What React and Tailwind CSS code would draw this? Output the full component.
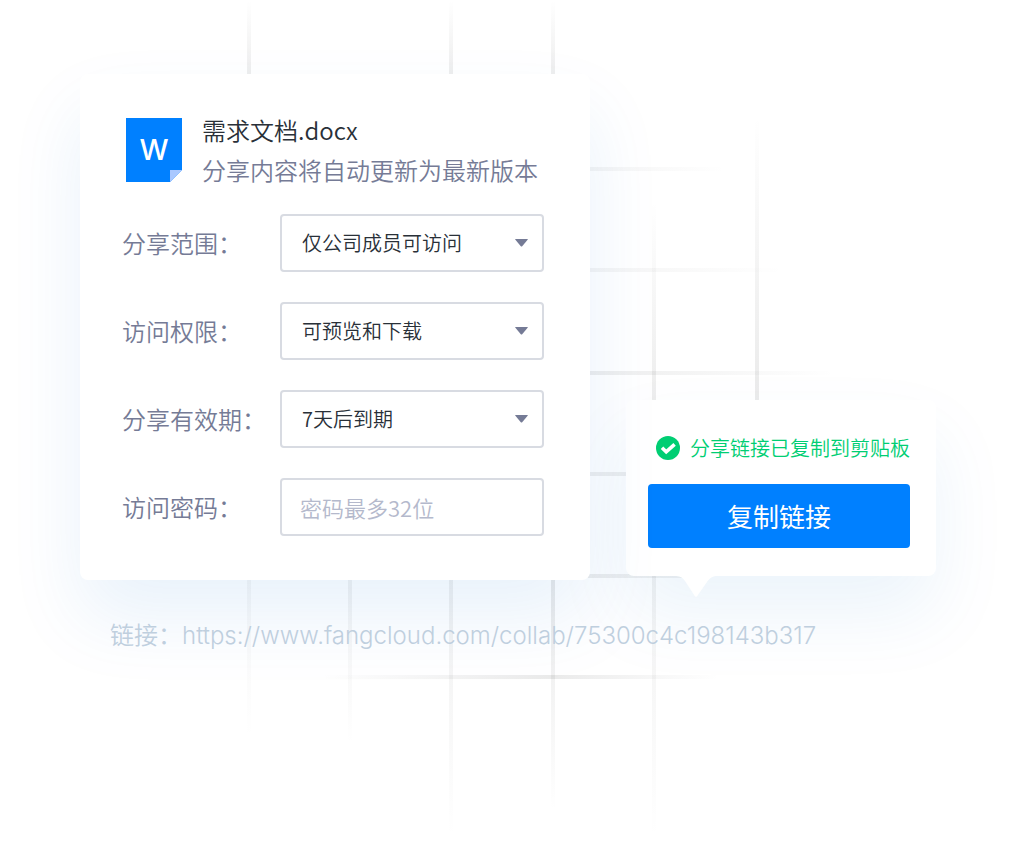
import React from "react";

const verticals = [
  { x: 247, y: 0, h: 78, from: 0, to: 0.08 },
  { x: 449, y: 0, h: 78, from: 0, to: 0.08 },
  { x: 551, y: 0, h: 78, from: 0, to: 0.08 },
  { x: 652, y: 200, h: 200, from: 0, to: 0.08 },
  { x: 755, y: 115, h: 285, from: 0, to: 0.09 },
  { x: 247, y: 576, h: 164, from: 0.04, to: 0 },
  { x: 348, y: 576, h: 170, from: 0.06, to: 0 },
  { x: 449, y: 576, h: 262, from: 0.07, to: 0 },
  { x: 551, y: 576, h: 236, from: 0.1, to: 0 },
  { x: 652, y: 576, h: 264, from: 0.06, to: 0 },
];

const horizontals = [
  { y: 167, x: 586, w: 140, from: 0.05, to: 0 },
  { y: 268, x: 586, w: 200, from: 0.05, to: 0 },
  { y: 371, x: 586, w: 250, from: 0.08, to: 0 },
  { y: 472, x: 586, w: 44, from: 0.07, to: 0.07 },
  { y: 574, x: 586, w: 100, from: 0.08, to: 0.05 },
  { y: 675, x: 320, w: 234, from: 0, to: 0.09 },
  { y: 675, x: 554, w: 166, from: 0.09, to: 0 },
];

function GridLines() {
  return (
    <svg className="absolute left-0 top-0" width="1016" height="848" aria-hidden="true">
      <defs>
        {verticals.map((l, i) => (
          <linearGradient key={i} id={`v${i}`} x1="0" y1="0" x2="0" y2="1">
            <stop offset="0" stopColor="#1a1c1c" stopOpacity={l.from} />
            <stop offset="1" stopColor="#1a1c1c" stopOpacity={l.to} />
          </linearGradient>
        ))}
        {horizontals.map((l, i) => (
          <linearGradient key={i} id={`h${i}`} x1="0" y1="0" x2="1" y2="0">
            <stop offset="0" stopColor="#1a1c1c" stopOpacity={l.from} />
            <stop offset="1" stopColor="#1a1c1c" stopOpacity={l.to} />
          </linearGradient>
        ))}
      </defs>
      {verticals.map((l, i) => (
        <rect key={i} x={l.x} y={l.y} width="4" height={l.h} fill={`url(#v${i})`} />
      ))}
      {horizontals.map((l, i) => (
        <rect key={i} x={l.x} y={l.y} width={l.w} height="4" fill={`url(#h${i})`} />
      ))}
    </svg>
  );
}

function Row({ id, label, children }) {
  return (
    <div className="flex items-center justify-between">
      <label htmlFor={id} className="text-[24px] leading-10 text-[#757b96]">
        {label}
      </label>
      <div className="relative w-[264px]">{children}</div>
    </div>
  );
}

function SelectField({ id, label, options }) {
  return (
    <Row id={id} label={label}>
      <select
        id={id}
        className="block h-[58px] w-full appearance-none rounded border-2 border-[#d8dbe2] bg-white pl-5 pr-12 text-[20px] text-[#293038]"
      >
        {options.map((o) => (
          <option key={o}>{o}</option>
        ))}
      </select>
      <svg
        className="pointer-events-none absolute right-4 top-[25px]"
        width="13"
        height="8"
        viewBox="0 0 13 8"
        aria-hidden="true"
      >
        <path d="M0.6 0H12.4Q13.2 0 12.6 0.8L7.2 7.2Q6.5 8 5.8 7.2L0.4 0.8Q-0.2 0 0.6 0Z" fill="#757b96" />
      </svg>
    </Row>
  );
}

function WordIcon() {
  return (
    <div className="relative flex h-16 w-14 shrink-0 items-center justify-center">
      <svg className="absolute inset-0" width="56" height="64" viewBox="0 0 56 64" aria-hidden="true">
        <path d="M0 0H56V52L44 64H0Z" fill="#0080ff" />
        <path d="M44 52H56L44 64Z" fill="#a9c8ff" />
      </svg>
      <span className="relative font-['Inter',sans-serif] text-[29px] font-medium leading-10 text-white">
        W
      </span>
    </div>
  );
}

export default function App() {
  return (
    <main
      lang="zh-CN"
      className="relative isolate min-h-screen overflow-hidden bg-white px-20 pt-[74px] font-['Noto_Sans_CJK_SC',sans-serif] font-[350]"
    >
      <GridLines />

      <div className="relative flex items-end gap-9">
        <form
          onSubmit={(e) => e.preventDefault()}
          className="relative z-10 w-[510px] shrink-0 rounded-lg bg-white pb-11 pl-[42px] pr-[46px] pt-9 shadow-[0_38px_76px_rgba(5,110,207,0.09)]"
        >
          <header className="mb-6 flex items-center gap-5 pl-1">
            <WordIcon />
            <div className="whitespace-nowrap text-[24px] leading-10">
              <h1 className="font-[350] text-[#293038]">需求文档.docx</h1>
              <p className="text-[#757b96]">分享内容将自动更新为最新版本</p>
            </div>
          </header>

          <div className="flex flex-col gap-[30px]">
            <SelectField id="scope" label="分享范围：" options={["仅公司成员可访问"]} />
            <SelectField id="permission" label="访问权限：" options={["可预览和下载"]} />
            <SelectField id="expiry" label="分享有效期：" options={["7天后到期"]} />
            <Row id="password" label="访问密码：">
              <input
                id="password"
                type="text"
                maxLength={32}
                placeholder="密码最多32位"
                className="block h-[58px] w-full rounded border-2 border-[#d8dbe2] bg-white px-[18px] text-[22px] text-[#293038] placeholder:text-[#b4b9cc]"
              />
            </Row>
          </div>
        </form>

        <section className="relative mb-1 w-[310px] shrink-0 rounded-lg bg-white pb-7 pl-[22px] pr-[26px] pt-9 shadow-[0_38px_76px_rgba(5,110,207,0.08)]">
          <p className="mb-6 flex items-center gap-2.5 whitespace-nowrap pl-2 text-[20px] leading-6 text-[#00ce73]">
            <svg width="24" height="24" viewBox="0 0 24 24" className="shrink-0" aria-hidden="true">
              <circle cx="12" cy="12" r="12" fill="#00ce73" />
              <path d="M6 11.8L10.2 15.8L18.6 8.4" fill="none" stroke="#fff" strokeWidth="3.6" />
            </svg>
            分享链接已复制到剪贴板
          </p>
          <button
            type="button"
            className="block h-16 w-full rounded bg-[#0080ff] pb-0.5 text-[26px] font-normal text-white"
          >
            复制链接
          </button>
          <svg
            className="absolute left-[50px] top-full"
            width="40"
            height="22"
            viewBox="0 0 40 22"
            aria-hidden="true"
          >
            <path d="M0 0C5 0.4 7 2 9 5L18.4 19.4Q20 22 21.6 19.4L31 6C33.5 2.5 35.5 0.5 40 0Z" fill="#fff" />
          </svg>
        </section>
      </div>

      <p className="relative z-10 mt-[34px] whitespace-nowrap pl-[30px] text-[24px] leading-10 text-[#bfcfde]">
        链接：
        <a
          href="https://www.fangcloud.com/collab/75300c4c198143b317"
          className="font-['Inter',sans-serif]"
        >
          https://www.fangcloud.com/collab/75300c4c198143b317
        </a>
      </p>
    </main>
  );
}
